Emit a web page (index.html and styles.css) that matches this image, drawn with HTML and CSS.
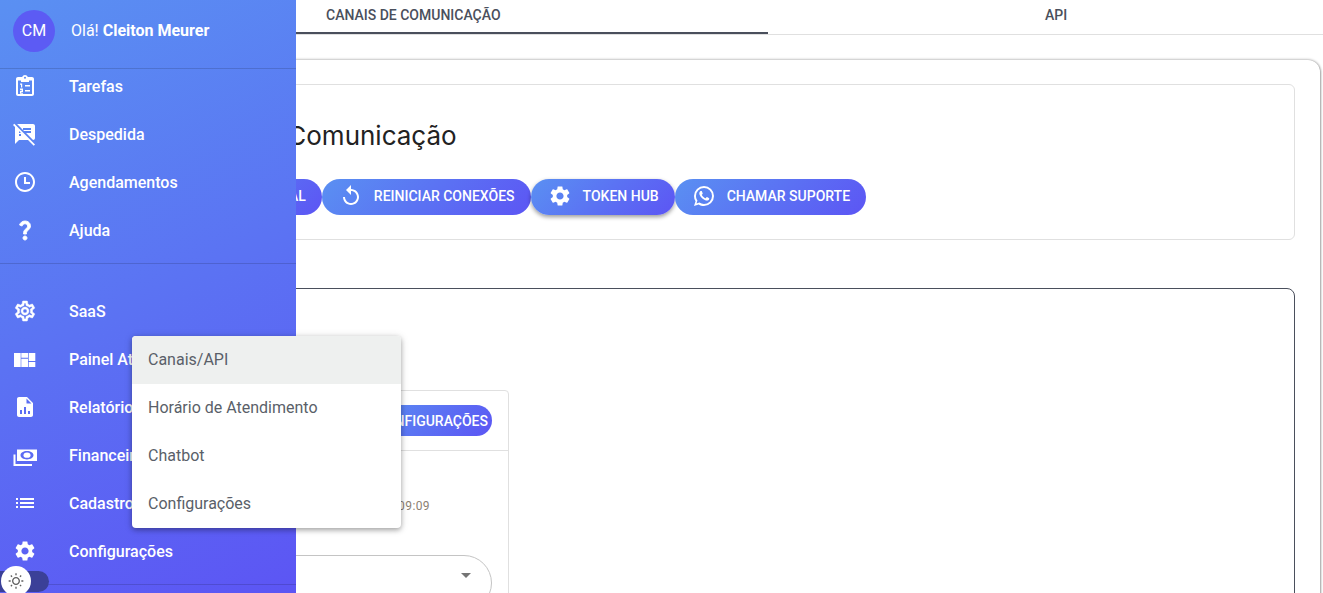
FILE: index.html
```html
<!DOCTYPE html>
<html lang="pt-BR">
<head>
<meta charset="utf-8">
<title>Canais de Comunicação</title>
<link rel="stylesheet" href="styles.css">
</head>
<body>
<div class="page">
  <main class="main">
    <nav class="tabs">
      <div class="tab tab-active">CANAIS DE COMUNICAÇÃO</div>
      <div class="tab tab-api">API</div>
    </nav>
    <section class="outer">
      <header class="head-card">
        <h1 class="title">Canais de Comunicação</h1>
        <div class="actions">
          <button class="btn btn-first"><span class="btn-ico"></span>NOVO CANAL</button>
          <button class="btn"><svg class="btn-ico" viewBox="0 0 24 24"><path d="M12 5V1L7 6l5 5V7c3.31 0 6 2.69 6 6s-2.69 6-6 6-6-2.69-6-6H4c0 4.42 3.58 8 8 8s8-3.58 8-8-3.58-8-8-8z"/></svg>REINICIAR CONEXÕES</button>
          <button class="btn btn-raised"><svg class="btn-ico" viewBox="0 0 24 24"><path d="M19.14 12.94c.04-.3.06-.61.06-.94 0-.32-.02-.64-.07-.94l2.03-1.58c.18-.14.23-.41.12-.61l-1.92-3.32c-.12-.22-.37-.29-.59-.22l-2.39.96c-.5-.38-1.03-.7-1.62-.94l-.36-2.54c-.04-.24-.24-.41-.48-.41h-3.84c-.24 0-.43.17-.47.41l-.36 2.54c-.59.24-1.13.57-1.62.94l-2.39-.96c-.22-.08-.47 0-.59.22L2.74 8.87c-.12.21-.08.47.12.61l2.03 1.58c-.05.3-.09.63-.09.94s.02.64.07.94l-2.03 1.58c-.18.14-.23.41-.12.61l1.92 3.32c.12.22.37.29.59.22l2.39-.96c.5.38 1.03.7 1.62.94l.36 2.54c.05.24.24.41.48.41h3.84c.24 0 .44-.17.47-.41l.36-2.54c.59-.24 1.13-.56 1.62-.94l2.39.96c.22.08.47 0 .59-.22l1.92-3.32c.12-.22.07-.47-.12-.61l-2.01-1.58zM12 15.6c-1.98 0-3.6-1.62-3.6-3.6s1.62-3.6 3.6-3.6 3.6 1.62 3.6 3.6-1.62 3.6-3.6 3.6z"/></svg>TOKEN HUB</button>
          <button class="btn"><svg class="btn-ico" viewBox="0 0 24 24"><path d="M16.75 13.96c.25.13.41.2.46.3.06.11.04.61-.21 1.18-.2.56-1.24 1.1-1.7 1.12-.46.02-.47.36-2.96-.73-2.49-1.09-3.99-3.75-4.11-3.92-.12-.17-.96-1.38-.92-2.61.05-1.22.69-1.8.95-2.04.24-.26.51-.29.68-.26h.47c.15 0 .36-.06.55.45l.69 1.87c.06.13.1.28.01.44l-.27.41-.39.42c-.12.12-.26.25-.12.5.12.26.62 1.09 1.32 1.78.91.88 1.71 1.17 1.95 1.3.24.14.39.12.54-.04l.81-.94c.19-.25.35-.19.58-.11l1.67.88M12 2a10 10 0 0 1 10 10 10 10 0 0 1-10 10c-1.97 0-3.8-.57-5.35-1.55L2 22l1.55-4.65A9.969 9.969 0 0 1 2 12 10 10 0 0 1 12 2m0 2a8 8 0 0 0-8 8c0 1.72.54 3.31 1.46 4.61L4.5 19.5l2.89-.96A7.95 7.95 0 0 0 12 20a8 8 0 0 0 8-8 8 8 0 0 0-8-8z"/></svg>CHAMAR SUPORTE</button>
        </div>
      </header>
      <div class="channels">
        <article class="channel">
          <div class="channel-head"><button class="btn-small">CONFIGURAÇÕES</button></div>
          <div class="channel-body">
            <div class="stamp">09:09</div>
            <div class="select"><span class="caret"></span></div>
          </div>
        </article>
      </div>
    </section>
  </main>

  <aside class="drawer">
    <div class="user">
      <div class="avatar">CM</div>
      <div class="hello">Olá! <strong>Cleiton Meurer</strong></div>
    </div>
    <ul class="nav nav-first">
      <li class="nav-item"><svg class="ico" viewBox="0 0 24 24"><path fill-rule="evenodd" d="M19 3h-4.2C14.4 1.8 13.3 1 12 1s-2.4.8-2.8 2H5C3.9 3 3 3.9 3 5v15c0 1.100.9 2 2 2h14c1.100 0 2-.9 2-2V5c0-1.100-.9-2-2-2zM12 2.800a1 1 0 1 1 0 2 1 1 0 0 1 0-2zM5 6.500h3V8h8V6.500h3V20H5z"/><path d="M7 9.500h2.200v4H8v-2.800H7zM7 14.500h3v3.400H8.300v.9H10v1H7v-2.700h1.700v-.9H7zM12 11h5v1.500h-5zM12 16h5v1.500h-5z"/></svg>Tarefas</li>
      <li class="nav-item"><svg class="ico" viewBox="0 0 24 24"><path d="M10.540 11l-.54-.54L7.540 8 6 6.460 2.380 2.840 1.270 1.730 0 3l2.010 2.010L2 22l4-4h9l5.730 5.730L22 22.460 17.540 18l-7-7zM8 14H6v-2h2v2zm-2-3V9l2 2H6zm14-9H4.080L10 7.920V6h8v2h-7.920l1 1H18v2h-4.920l6.990 6.990C21.140 17.950 22 17.080 22 16V4c0-1.100-.9-2-2-2z"/></svg>Despedida</li>
      <li class="nav-item"><svg class="ico" viewBox="0 0 24 24"><path d="M11.990 2C6.470 2 2 6.480 2 12s4.470 10 9.990 10C17.520 22 22 17.520 22 12S17.520 2 11.990 2zM12 20c-4.420 0-8-3.580-8-8s3.580-8 8-8 8 3.580 8 8-3.580 8-8 8z"/><path d="M11 7h2v5h4v2h-6z"/></svg>Agendamentos</li>
      <li class="nav-item"><svg class="ico ico-heavy" viewBox="0 0 24 24"><path d="M11.070 12.850c.77-1.390 2.250-2.210 3.110-3.440.91-1.290.4-3.700-2.180-3.700-1.690 0-2.520 1.280-2.870 2.340L6.540 6.960C7.250 4.830 9.180 3 11.990 3c2.350 0 3.960 1.070 4.780 2.410.7 1.150 1.110 3.300.03 4.900-1.200 1.770-2.350 2.310-2.970 3.450-.25.46-.35.76-.35 2.240h-2.890c-.01-.78-.13-2.050.48-3.150zM14 20c0 1.100-.9 2-2 2s-2-.9-2-2 .9-2 2-2 2 .9 2 2z"/></svg>Ajuda</li>
    </ul>
    <ul class="nav nav-second">
      <li class="nav-item"><svg class="ico ico-bold" viewBox="0 0 24 24"><path d="M19.430 12.980c.04-.32.07-.64.07-.98 0-.34-.03-.66-.07-.98l2.110-1.650c.19-.15.24-.42.12-.64l-2-3.460c-.09-.16-.26-.25-.44-.25-.06 0-.12.01-.17.03l-2.490 1c-.52-.4-1.080-.73-1.690-.98l-.38-2.650C14.460 2.180 14.250 2 14 2h-4c-.25 0-.46.18-.49.42l-.38 2.650c-.61.25-1.170.59-1.690.98l-2.490-1c-.06-.02-.12-.03-.18-.03-.17 0-.34.09-.43.25l-2 3.460c-.13.22-.07.49.12.64l2.110 1.650c-.04.32-.07.65-.07.98 0 .33.03.66.07.98l-2.110 1.650c-.19.15-.24.42-.12.64l2 3.460c.09.16.26.25.44.25.06 0 .12-.01.17-.03l2.490-1c.52.4 1.080.73 1.690.98l.38 2.650c.03.24.24.42.49.42h4c.25 0 .46-.18.49-.42l.38-2.650c.61-.25 1.170-.59 1.690-.98l2.490 1c.06.02.12.03.18.03.17 0 .34-.09.43-.25l2-3.460c.12-.22.07-.49-.12-.64l-2.110-1.650zm-1.980-1.710c.04.31.05.52.05.73 0 .21-.02.43-.05.73l-.14 1.130.89.7 1.080.84-.7 1.210-1.270-.51-1.040-.42-.9.68c-.43.32-.84.56-1.250.73l-1.060.43-.16 1.130-.2 1.350h-1.400l-.19-1.350-.16-1.130-1.060-.43c-.43-.18-.83-.41-1.230-.71l-.91-.7-1.060.43-1.270.51-.7-1.210 1.080-.84.89-.7-.14-1.130c-.03-.31-.05-.54-.05-.74s.02-.43.05-.73l.14-1.130-.89-.7-1.080-.84.7-1.210 1.270.51 1.040.42.9-.68c.43-.32.84-.56 1.250-.73l1.060-.43.16-1.130.2-1.350h1.390l.19 1.350.16 1.130 1.060.43c.43.18.83.41 1.230.71l.91.7 1.060-.43 1.270-.51.7 1.210-1.070.85-.89.7.14 1.130zM12 8c-2.210 0-4 1.790-4 4s1.790 4 4 4 4-1.790 4-4-1.790-4-4-4zm0 6c-1.100 0-2-.9-2-2s.9-2 2-2 2 .9 2 2-.9 2-2 2z"/></svg>SaaS</li>
      <li class="nav-item"><svg class="ico" viewBox="0 0 24 24"><path d="M1 6h6.700v14H1zM8.300 6H15v4.700H8.300zM8.300 11.700H15V20H8.300zM15.700 6h6.600v8h-6.600zM15.700 15h6.600v5h-6.600z"/></svg>Painel Atendimento</li>
      <li class="nav-item"><svg class="ico" viewBox="0 0 24 24"><path fill-rule="evenodd" d="M14 2H6c-1.100 0-2 .9-2 2v16c0 1.100.9 2 2 2h12c1.100 0 2-.9 2-2V8zM9 19H7v-4h2zm4 0h-2v-7h2zm4 0h-2v-3h2zM13.500 8.500V3.500l5 5z"/></svg>Relatórios</li>
      <li class="nav-item"><svg class="ico" viewBox="0 0 24 24"><path fill-rule="evenodd" d="M4 6.500h20V18H4zM14 8c-3.600 0-6.500 1.900-6.500 4.200s2.900 4.200 6.500 4.200 6.500-1.900 6.500-4.200S17.600 8 14 8z"/><ellipse cx="14" cy="12.200" rx="3.500" ry="2.600"/><path d="M.5 11.500h2V21H19v2H.5z"/></svg>Financeiro</li>
      <li class="nav-item"><svg class="ico" viewBox="0 0 24 24"><path d="M3 13h2v-2H3v2zm0 4h2v-2H3v2zm0-8h2V7H3v2zm4 4h14v-2H7v2zm0 4h14v-2H7v2zM7 7v2h14V7H7z"/></svg>Cadastros</li>
      <li class="nav-item"><svg class="ico" viewBox="0 0 24 24"><path d="M19.140 12.940c.04-.3.06-.61.06-.94 0-.32-.02-.64-.07-.94l2.030-1.580c.18-.14.23-.41.12-.61l-1.920-3.320c-.12-.22-.37-.29-.59-.22l-2.390.96c-.5-.38-1.030-.7-1.620-.94l-.36-2.540c-.04-.24-.24-.41-.48-.41h-3.840c-.24 0-.43.17-.47.41l-.36 2.540c-.59.24-1.130.57-1.620.94l-2.390-.96c-.22-.08-.47 0-.59.22L2.740 8.870c-.12.21-.08.47.12.61l2.030 1.580c-.05.3-.09.63-.09.94s.02.64.07.94l-2.030 1.580c-.18.14-.23.41-.12.61l1.920 3.320c.12.22.37.29.59.22l2.390-.96c.5.38 1.030.7 1.620.94l.36 2.540c.05.24.24.41.48.41h3.840c.24 0 .44-.17.47-.41l.36-2.540c.59-.24 1.130-.56 1.620-.94l2.390.96c.22.08.47 0 .59-.22l1.920-3.320c.12-.22.07-.47-.12-.61l-2.010-1.580zM12 15.600c-1.980 0-3.600-1.620-3.600-3.600s1.620-3.600 3.600-3.600 3.600 1.620 3.600 3.600-1.620 3.600-3.600 3.600z"/></svg>Configurações</li>
    </ul>
    <div class="drawer-end"></div>
    <div class="toggle">
      <span class="knob"><svg class="sun" viewBox="0 0 24 24"><path d="M6.760 4.840l-1.800-1.790-1.410 1.410 1.790 1.790zM1 11h3v2H1zM11 .5h2v3h-2zm8.040 2.495l1.408 1.407-1.790 1.790-1.407-1.408zm-1.800 15.615l1.790 1.800 1.410-1.410-1.800-1.790zM20 11h3v2h-3zm-8-5c-3.310 0-6 2.690-6 6s2.690 6 6 6 6-2.690 6-6-2.690-6-6-6zm0 10c-2.210 0-4-1.790-4-4s1.790-4 4-4 4 1.790 4 4-1.790 4-4 4zm-1 4.500h2v3h-2zm-7.450-1.460l1.410 1.410 1.790-1.800-1.410-1.410z"/></svg></span>
    </div>
  </aside>

  <ul class="menu">
    <li class="menu-item menu-item-active">Canais/API</li>
    <li class="menu-item">Horário de Atendimento</li>
    <li class="menu-item">Chatbot</li>
    <li class="menu-item">Configurações</li>
  </ul>
</div>
</body>
</html>
```
FILE: styles.css
```css
* { box-sizing: border-box; }
html, body { margin: 0; height: 100%; overflow: hidden; background: #fff; }
body { font-family: Roboto, "Liberation Sans", sans-serif; }
ul { list-style: none; margin: 0; padding: 0; }
button { font-family: inherit; border: 0; cursor: pointer; }

.page { position: relative; width: 1323px; height: 593px; overflow: hidden; }

/* Main column, partly covered by the drawer */
.main { display: flex; flex-direction: column; height: 100%; }

.tabs { display: flex; height: 35px; flex: none; border-bottom: 1px solid #e0e0e0; }
.tab { height: 34px; line-height: 31px; font-size: 14px; font-weight: 500; color: #4a4f5c; white-space: nowrap; }
.tab-active { flex: 0 0 768px; padding-left: 326px; border-bottom: 2px solid #4a4f5c; }
.tab-api { flex: 1; padding-left: 277px; }

.outer {
  flex: 1;
  margin: 25px 3px 0 72px;
  padding: 24px 25px 0 24px;
  border-radius: 12px 12px 0 0;
  box-shadow: 0 0 3px rgba(0, 0, 0, .45), 1px 1px 2px rgba(0, 0, 0, .2);
  background: #fff;
}

.head-card {
  height: 156px;
  padding: 33px 0 0 61px;
  border: 1px solid #e0e0e0;
  border-radius: 6px;
}
.title {
  margin: 0 0 25px;
  font-family: Inter, sans-serif;
  font-size: 26px;
  line-height: 36px;
  font-weight: 400;
  color: #222;
  white-space: nowrap;
}
.actions { display: flex; }
.btn {
  display: flex;
  align-items: center;
  height: 36px;
  padding: 0 16px 2px 17px;
  border-radius: 18px;
  background: linear-gradient(135deg, #5a90f2, #5c55f4);
  color: #fff;
  font-size: 14px;
  font-weight: 500;
  white-space: nowrap;
}
.btn-first { padding-left: 26px; }
.btn-raised { box-shadow: 0 2px 4px rgba(0, 0, 0, .4); }
.btn-ico { flex: none; width: 24px; height: 24px; margin-right: 11px; fill: #fff; }

.channels {
  height: 400px;
  margin-top: 48px;
  padding: 101px 0 0 64px;
  border: 1px solid #4a4f5c;
  border-radius: 8px;
}
.channel {
  width: 348px;
  height: 300px;
  border: 1px solid #e0e0e0;
  border-radius: 4px;
}
.channel-head {
  display: flex;
  justify-content: flex-end;
  height: 60px;
  padding: 14px 16px 0 0;
  border-bottom: 1px solid #e0e0e0;
}
.btn-small {
  height: 31px;
  padding: 0 4px 0 12px;
  border-radius: 16px;
  background: linear-gradient(135deg, #5a90f2, #5c55f4);
  color: #fff;
  font-size: 14px;
  font-weight: 500;
}
.channel-body { padding: 47px 16px 0; }
.stamp {
  margin-right: 62px;
  text-align: right;
  font-size: 12px;
  line-height: 16px;
  letter-spacing: .4px;
  color: #8b7f73;
}
.select {
  position: relative;
  height: 56px;
  margin-top: 41px;
  border: 1px solid #c4c4c4;
  border-radius: 28px;
}
.caret {
  position: absolute;
  top: 17px;
  right: 20px;
  border-left: 5px solid transparent;
  border-right: 5px solid transparent;
  border-top: 5px solid #757575;
}

/* Navigation drawer */
.drawer {
  position: absolute;
  inset: 0 auto 0 0;
  width: 296px;
  display: flex;
  flex-direction: column;
  background: linear-gradient(155deg, #5a90f2 0%, #5c55f4 100%);
  color: #fff;
}
.user {
  display: flex;
  align-items: center;
  gap: 16px;
  flex: none;
  height: 69px;
  padding: 0 13px 7px;
  border-bottom: 1px solid rgba(0, 0, 0, .14);
}
.avatar {
  flex: none;
  width: 42px;
  height: 42px;
  border-radius: 50%;
  background: #5c5bf4;
  line-height: 42px;
  text-align: center;
  font-size: 16px;
}
.hello { font-size: 16px; font-weight: 400; }
.hello strong { font-weight: 700; }
.nav-first { height: 202px; margin-top: -7px; padding-bottom: 9px; border-bottom: 1px solid rgba(0, 0, 0, .14); }
.nav-second { padding-top: 23px; }
.nav-item {
  display: flex;
  align-items: center;
  height: 48px;
  padding-left: 13px;
  font-size: 16px;
  font-weight: 500;
  white-space: nowrap;
}
.ico { flex: none; width: 24px; height: 24px; margin-right: 32px; fill: #fff; }
.ico-bold { stroke: #fff; stroke-width: .5; }
.ico-heavy { stroke: #fff; stroke-width: .9; }
.drawer-end { height: 1px; margin-top: 9px; background: rgba(0, 0, 0, .14); }

.toggle {
  position: absolute;
  left: 0;
  top: 571px;
  width: 49px;
  height: 21px;
  border-radius: 0 11px 11px 0;
  background: #3b4098;
}
.knob {
  position: absolute;
  left: 1px;
  top: -5px;
  display: flex;
  align-items: center;
  justify-content: center;
  width: 30px;
  height: 30px;
  border-radius: 50%;
  background: #fff;
}
.sun { width: 16px; height: 16px; fill: #5f5f5f; }

/* Popover menu */
.menu {
  position: absolute;
  left: 132px;
  top: 336px;
  width: 269px;
  background: #fff;
  border-radius: 4px;
  overflow: hidden;
  box-shadow: 0 2px 5px rgba(0, 0, 0, .3), 0 1px 10px rgba(0, 0, 0, .12);
}
.menu-item {
  height: 48px;
  padding: 0 16px;
  line-height: 47px;
  font-size: 16px;
  color: #5a5f69;
}
.menu-item-active { background: #eef0ef; }
```
